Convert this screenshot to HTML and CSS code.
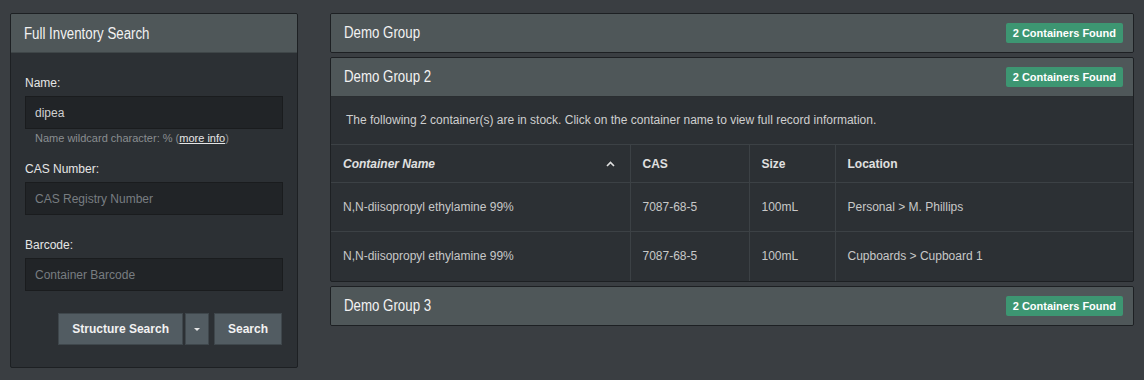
FILE: index.html
```html
<!DOCTYPE html>
<html>
<head>
<meta name="viewport" content="width=device-width">
<link rel="stylesheet" href="styles.css">
<title>Inventory Search</title>
</head>
<body>
<div class="page">
	<div class="side">
		<div class="panel search">
			<div class="panel-heading">
				<h3>Full Inventory Search</h3>
			</div>
			<form class="panel-body">
				<label for="name">Name:</label>
				<input id="name" class="field" value="dipea">
				<p class="help">Name wildcard character: % (<a href="#">more info</a>)</p>

				<label for="cas">CAS Number:</label>
				<input id="cas" class="field" placeholder="CAS Registry Number">

				<label for="barcode">Barcode:</label>
				<input id="barcode" class="field" placeholder="Container Barcode">

				<div class="actions">
					<button type="button" class="btn">Structure Search</button>
					<button type="button" class="btn caret-btn"><span class="caret"></span></button>
					<button type="button" class="btn">Search</button>
				</div>
			</form>
		</div>
	</div>

	<div class="main">
		<div class="panel">
			<div class="panel-heading">
				<h3>Demo Group</h3>
				<span class="badge">2 Containers Found</span>
			</div>
		</div>

		<div class="panel">
			<div class="panel-heading">
				<h3>Demo Group 2</h3>
				<span class="badge">2 Containers Found</span>
			</div>
			<p class="intro">The following 2 container(s) are in stock. Click on the container name to view full record information.</p>
			<table class="results">
				<thead>
				<tr>
					<th class="col-name">
						<span>Container Name</span>
						<svg class="sort" width="9" height="6" viewBox="0 0 9 6"><polyline points="1,5 4.5,1.5 8,5" fill="none" stroke="#e0e0e0" stroke-width="1.6"/></svg>
					</th>
					<th class="col-cas">CAS</th>
					<th class="col-size">Size</th>
					<th>Location</th>
				</tr>
				</thead>
				<tbody>
				<tr>
					<td>N,N-diisopropyl ethylamine 99%</td>
					<td>7087-68-5</td>
					<td>100mL</td>
					<td>Personal &gt; M. Phillips</td>
				</tr>
				<tr>
					<td>N,N-diisopropyl ethylamine 99%</td>
					<td>7087-68-5</td>
					<td>100mL</td>
					<td>Cupboards &gt; Cupboard 1</td>
				</tr>
				</tbody>
			</table>
		</div>

		<div class="panel">
			<div class="panel-heading">
				<h3>Demo Group 3</h3>
				<span class="badge">2 Containers Found</span>
			</div>
		</div>
	</div>
</div>
</body>
</html>
```

FILE: styles.css
```css
* {
	box-sizing: border-box;
}
html, body {
	margin: 0;
	height: 100%;
}
body {
	background-color: #3a3e42;
	font-family: "Liberation Sans", Arial, sans-serif;
	font-size: 12px;
	color: #c8c8c8;
}
.page {
	display: flex;
	gap: 32px;
	padding: 13px 10px 0 10px;
	align-items: flex-start;
}
.side {
	width: 288px;
}
.main {
	flex: 1;
	display: flex;
	flex-direction: column;
	gap: 4px;
}

/* panels */
.panel {
	background-color: #2c3034;
	border: 1px solid #1d2023;
	border-radius: 2px;
	overflow: hidden;
}
.panel-heading {
	display: flex;
	align-items: center;
	justify-content: space-between;
	height: 38px;
	padding: 0 10px 0 13px;
	background-color: #4f5759;
}
.panel-heading h3 {
	margin: 0;
	font-family: "Liberation Sans", Arial, sans-serif;
	font-weight: normal;
	font-size: 16px;
	color: #f2f2f2;
	transform: scaleX(0.83);
	transform-origin: left center;
	white-space: nowrap;
}
.badge {
	background-color: #3d9672;
	color: #ffffff;
	font-weight: bold;
	font-size: 11px;
	line-height: 12px;
	padding: 4px 7px;
	border-radius: 2px;
}

/* search form */
.search .panel-heading {
	height: 39px;
	padding-top: 1px;
	border-bottom: 1px solid #3f4648;
}
.search .panel-body {
	padding: 23px 14px 22px 14px;
	display: flex;
	flex-direction: column;
}
label {
	color: #e6e6e6;
	font-size: 12px;
	line-height: 14px;
	margin-bottom: 6px;
}
.field {
	height: 33px;
	background-color: #212427;
	border: 1px solid #1a1c1e;
	color: #d0d0d0;
	font-family: "Liberation Sans", Arial, sans-serif;
	font-size: 12px;
	padding: 0 9px;
	margin-bottom: 23px;
	outline: none;
}
.field::placeholder {
	color: #787d81;
}
#name {
	margin-bottom: 3px;
}
.help {
	margin: 0 0 17px 10px;
	font-size: 11px;
	line-height: 13px;
	color: #8a8e91;
}
.help a {
	color: #e6e6e6;
}
.actions {
	display: flex;
	justify-content: flex-end;
	gap: 2px;
	margin-top: -1px;
	padding-right: 1px;
}
.btn {
	height: 32px;
	background-color: #525c62;
	border: 1px solid #3f474c;
	color: #f2f2f2;
	font-family: "Liberation Sans", Arial, sans-serif;
	font-weight: bold;
	font-size: 12px;
	padding: 0 13px;
}
.caret-btn {
	width: 24px;
	padding: 0;
	margin-right: 3px;
}
.caret {
	display: inline-block;
	border-left: 3px solid transparent;
	border-right: 3px solid transparent;
	border-top: 3px solid #e6e6e6;
	vertical-align: middle;
}

/* results */
.intro {
	margin: 0;
	padding: 16px 15px 17px 15px;
	line-height: 14px;
	border-top: 1px solid #2a2e31;
	font-size: 12px;
	color: #cfcfcf;
}
.results {
	width: 100%;
	border-collapse: collapse;
}
.results th, .results td {
	border: 1px solid #3c4145;
	text-align: left;
	padding: 0 12px;
}
.results tr > :first-child {
	border-left: none;
}
.results tr > :last-child {
	border-right: none;
}
.results tbody tr:last-child td {
	border-bottom: none;
}
.results th {
	height: 38px;
	color: #e0e0e0;
	font-size: 12px;
}
.results td {
	height: 49px;
	color: #c8c8c8;
}
.col-name {
	width: 299px;
}
.col-name span {
	font-style: italic;
}
.sort {
	float: right;
	margin: 4px 3px 0 0;
}
.col-cas {
	width: 119px;
}
.col-size {
	width: 86px;
}
```
